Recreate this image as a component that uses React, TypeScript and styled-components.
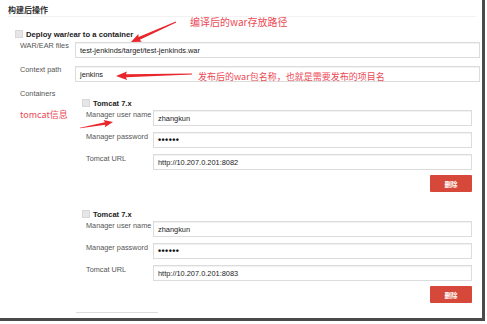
import React from "react";
import styled, { createGlobalStyle } from "styled-components";

const Global = createGlobalStyle`
  html, body { margin: 0; padding: 0; background: #ffffff; }
  body { font-family: "Liberation Sans", Arial, sans-serif; }
  * { box-sizing: border-box; }
`;

const Frame = styled.div`
  position: relative;
  width: 485px;
  height: 321px;
  background: #ffffff;
  border-right: 3px solid #4a4a4a;
  border-bottom: 3px solid #4a4a4a;
  overflow: hidden;
`;

const Main = styled.div`
  display: flex;
  flex-direction: column;
  padding: 5px 0 0 8px;
`;

const Header = styled.div`
  font-family: "Liberation Sans", "Noto Sans CJK SC", sans-serif;
  font-size: 8px;
  font-weight: bold;
  line-height: 11px;
  height: 12px;
  color: #333;
  border-bottom: 1px solid #f2f2f2;
  margin-right: 6px;
`;

const Section = styled.div`
  display: flex;
  flex-direction: column;
  padding-left: 7px;
  margin-top: 11px;
`;

const CheckRow = styled.div`
  display: flex;
  align-items: center;
  gap: 3px;
  height: 12px;
`;

const Check = styled.span`
  display: inline-block;
  width: 8px;
  height: 8px;
  background: #e6e6e6;
  border: 1px solid #d8d8d8;
`;

const CheckTitle = styled.span<{ $size: number }>`
  font-size: ${(p) => p.$size}px;
  font-weight: bold;
  color: #222;
`;

const FieldRow = styled.div<{ $label: number; $input: number; $gap: number }>`
  display: grid;
  grid-template-columns: ${(p) => p.$label}px ${(p) => p.$input}px;
  align-items: start;
  margin-top: ${(p) => p.$gap}px;
`;

const Label = styled.div<{ $pad: number }>`
  font-size: 7.3px;
  line-height: 11px;
  color: #555;
  padding-left: ${(p) => p.$pad}px;
  white-space: nowrap;
`;

const Input = styled.div<{ $mt: number }>`
  margin-top: ${(p) => p.$mt}px;
  height: 16px;
  border: 1px solid #dcdcdc;
  box-shadow: inset 0 1px 1px rgba(0, 0, 0, 0.06);
  background: #fff;
  font-size: 7.4px;
  color: #222;
  padding-left: 4px;
  display: flex;
  align-items: center;
`;

const Dots = styled.span`
  font-size: 9px;
  font-weight: bold;
  letter-spacing: 0.4px;
  color: #111;
`;

const ContainersLabel = styled(Label)`
  margin-top: 6px;
`;

const TomcatList = styled.div`
  display: flex;
  flex-direction: column;
  margin-left: 67px;
  margin-top: -2px;
`;

const TomcatBlock = styled.div<{ $mt: number }>`
  display: flex;
  flex-direction: column;
  margin-top: ${(p) => p.$mt}px;
  width: 390px;
`;

const ButtonRow = styled.div`
  display: flex;
  justify-content: flex-end;
  margin-top: 5px;
`;

const DeleteButton = styled.button`
  width: 42px;
  height: 17px;
  border: none;
  border-radius: 1px;
  background: #d5483a;
  color: #fff;
  font-family: "Noto Sans CJK SC", sans-serif;
  font-size: 6.5px;
  font-weight: bold;
  padding: 0;
`;

const BottomRule = styled.div`
  margin-top: 9px;
  margin-left: -6px;
  width: 82px;
  border-top: 1px solid #dcdcdc;
`;

const Overlay = styled.svg`
  position: absolute;
  left: 0;
  top: 0;
  pointer-events: none;
`;

const Note = styled.span<{ $x: number; $y: number; $size: number }>`
  position: absolute;
  left: ${(p) => p.$x}px;
  top: ${(p) => p.$y}px;
  font-family: "Noto Sans CJK SC", sans-serif;
  font-size: ${(p) => p.$size}px;
  line-height: 1;
  color: #ec4a55;
  white-space: nowrap;
`;

type Pt = [number, number];

function arrowPoints(tail: Pt, tip: Pt, headLen = 8, headW = 4, shaftW = 1.4, tailW = 0.3): string {
  const dx = tip[0] - tail[0];
  const dy = tip[1] - tail[1];
  const len = Math.hypot(dx, dy);
  const ux = dx / len;
  const uy = dy / len;
  const nx = -uy;
  const ny = ux;
  const bx = tip[0] - ux * headLen;
  const by = tip[1] - uy * headLen;
  const pts: Pt[] = [
    [tail[0] + nx * tailW, tail[1] + ny * tailW],
    [bx + nx * shaftW, by + ny * shaftW],
    [bx - ux * 1 + nx * headW, by - uy * 1 + ny * headW],
    tip,
    [bx - ux * 1 - nx * headW, by - uy * 1 - ny * headW],
    [bx - nx * shaftW, by - ny * shaftW],
    [tail[0] - nx * tailW, tail[1] - ny * tailW],
  ];
  return pts.map((p) => `${p[0].toFixed(1)},${p[1].toFixed(1)}`).join(" ");
}

const fields1 = [
  { label: "Manager user name", value: "zhangkun" },
  { label: "Manager password", value: "pw" },
  { label: "Tomcat URL", value: "http://10.207.0.201:8082" },
];
const fields2 = [
  { label: "Manager user name", value: "zhangkun" },
  { label: "Manager password", value: "pw" },
  { label: "Tomcat URL", value: "http://10.207.0.201:8083" },
];

function Tomcat({ fields, mt }: { fields: { label: string; value: string }[]; mt: number }) {
  return (
    <TomcatBlock $mt={mt}>
      <CheckRow>
        <Check />
        <CheckTitle $size={7.5}>Tomcat 7.x</CheckTitle>
      </CheckRow>
      {fields.map((f, i) => (
        <FieldRow key={f.label} $label={71} $input={319} $gap={i === 0 ? 0 : 5}>
          <Label $pad={4}>{f.label}</Label>
          <Input $mt={1}>{f.value === "pw" ? <Dots>••••••</Dots> : f.value}</Input>
        </FieldRow>
      ))}
      <ButtonRow>
        <DeleteButton>删除</DeleteButton>
      </ButtonRow>
    </TomcatBlock>
  );
}

export default function App() {
  return (
    <>
      <Global />
      <Frame>
        <Main>
          <Header>构建后操作</Header>
          <Section>
            <CheckRow>
              <Check />
              <CheckTitle $size={7.7}>Deploy war/ear to a container</CheckTitle>
            </CheckRow>
            <FieldRow $label={60} $input={405} $gap={0}>
              <Label $pad={5}>WAR/EAR files</Label>
              <Input $mt={2}>test-jenkinds/target/test-jenkinds.war</Input>
            </FieldRow>
            <FieldRow $label={60} $input={405} $gap={6}>
              <Label $pad={5}>Context path</Label>
              <Input $mt={2}>jenkins</Input>
            </FieldRow>
            <ContainersLabel $pad={5}>Containers</ContainersLabel>
            <TomcatList>
              <Tomcat fields={fields1} mt={0} />
              <Tomcat fields={fields2} mt={16} />
              <BottomRule />
            </TomcatList>
          </Section>
        </Main>
        <Overlay width={485} height={321} viewBox="0 0 485 321">
          <polygon points={arrowPoints([176, 22], [131, 42], 9, 4.2, 1.5, 0.4)} fill="#e8262b" />
          <polygon points={arrowPoints([192, 74], [116, 76], 10, 4.2, 1.5, 0.4)} fill="#e8262b" />
          <polygon points={arrowPoints([80, 128], [113, 122], 8, 3.6, 1.3, 0.3)} fill="#e8262b" />
        </Overlay>
        <Note $x={190} $y={17} $size={10}>编译后的war存放路径</Note>
        <Note $x={198} $y={72} $size={9}>发布后的war包名称，也就是需要发布的项目名</Note>
        <Note $x={20} $y={110} $size={9}>tomcat信息</Note>
      </Frame>
    </>
  );
}
